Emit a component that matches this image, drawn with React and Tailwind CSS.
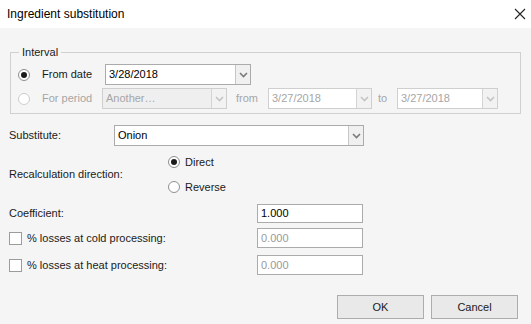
import React from "react";

const Chevron = ({ disabled }) => (
  <svg width="9" height="6" viewBox="0 0 9 6">
    <path
      d="M1 1 L4.5 4.5 L8 1"
      fill="none"
      stroke={disabled ? "#c4c4c4" : "#7a7a7a"}
      strokeWidth="1.6"
    />
  </svg>
);

function Combo({ value, width, height = "h-[21px]", disabled, grayField }) {
  return (
    <div
      className={`flex ${height} ${width} border ${
        disabled ? "border-[#cfcfcf]" : "border-[#ababab]"
      } ${grayField ? "bg-[#efefef]" : "bg-white"}`}
    >
      <div
        className={`flex-1 flex items-center pl-[3px] ${
          disabled ? "text-[#a6a6a6]" : "text-black"
        }`}
      >
        {value}
      </div>
      <div
        className={`w-[15px] flex items-center justify-center border-l ${
          disabled ? "border-[#d4d4d4] bg-[#f2f2f2]" : "border-[#c6c6c6] bg-[#f0f0f0]"
        }`}
      >
        <Chevron disabled={disabled} />
      </div>
    </div>
  );
}

function Radio({ checked, disabled }) {
  return (
    <div
      className={`w-[12px] h-[12px] rounded-full border flex items-center justify-center bg-white ${
        disabled ? "border-[#cdcdcd]" : "border-[#8f8f8f]"
      }`}
    >
      {checked && <div className="w-[6px] h-[6px] rounded-full bg-[#1c1c1c]" />}
    </div>
  );
}

function NumInput({ value, muted, height = "h-[20px]" }) {
  return (
    <div
      className={`w-[106px] ${height} border border-[#ababab] bg-white flex items-center pl-[3px] ${
        muted ? "text-[#9a9a9a]" : "text-black"
      }`}
    >
      {value}
    </div>
  );
}

export default function App() {
  return (
    <div
      className="w-[531px] h-[324px] bg-[#f5f5f5] text-[11px] text-[#1a1a1a] flex flex-col"
      style={{ fontFamily: '"Liberation Sans", Arial, sans-serif' }}
    >
      {/* title bar */}
      <div className="h-[28px] bg-white flex items-center justify-between pl-[7px] pr-[5px] shrink-0">
        <span className="text-[12px] text-black">Ingredient substitution</span>
        <svg width="12" height="12" viewBox="0 0 12 12">
          <path d="M1 1 L11 11 M11 1 L1 11" stroke="#222" strokeWidth="1.1" />
        </svg>
      </div>

      {/* interval group */}
      <fieldset className="mt-[17px] ml-[10px] w-[511px] border border-[#d0d0d0] pb-[4px]">
        <legend className="ml-[8px] px-[3px] leading-[14px]">Interval</legend>
        <div className="flex flex-col gap-[3px] mt-[5px]">
          <div className="flex items-center h-[21px]">
            <div className="ml-[7px] mr-[12px]">
              <Radio checked />
            </div>
            <span className="w-[63px]">From date</span>
            <Combo value="3/28/2018" width="w-[146px]" />
          </div>
          <div className="flex items-center h-[21px] text-[#a6a6a6]">
            <div className="ml-[7px] mr-[12px]">
              <Radio disabled />
            </div>
            <span className="w-[60px]">For period</span>
            <Combo value="Another…" width="w-[125px]" disabled grayField />
            <span className="w-[41px] pl-[9px]">from</span>
            <Combo value="3/27/2018" width="w-[104px]" disabled />
            <span className="w-[25px] pl-[6px]">to</span>
            <Combo value="3/27/2018" width="w-[101px]" disabled />
          </div>
        </div>
      </fieldset>

      {/* substitute */}
      <div className="flex items-center mt-[11px] ml-[9px]">
        <span className="w-[105px]">Substitute:</span>
        <Combo value="Onion" width="w-[250px]" height="h-[21px]" />
      </div>

      {/* direction */}
      <div className="flex items-center mt-[6px] ml-[9px]">
        <span className="w-[159px]">Recalculation direction:</span>
        <div className="flex flex-col gap-[5px]">
          <div className="flex items-center h-[20px] gap-[5px]">
            <Radio checked />
            <span>Direct</span>
          </div>
          <div className="flex items-center h-[20px] gap-[5px]">
            <Radio />
            <span>Reverse</span>
          </div>
        </div>
      </div>

      {/* numeric fields */}
      <div className="flex items-center mt-[7px] ml-[9px]">
        <span className="w-[248px]">Coefficient:</span>
        <NumInput value="1.000" height="h-[19px]" />
      </div>
      <div className="flex items-center mt-[5px] ml-[9px]">
        <div className="w-[13px] h-[13px] border border-[#9c9c9c] bg-white mr-[5px]" />
        <span className="w-[230px]">% losses at cold processing:</span>
        <NumInput value="0.000" muted />
      </div>
      <div className="flex items-center mt-[7px] ml-[9px]">
        <div className="w-[13px] h-[13px] border border-[#9c9c9c] bg-white mr-[5px]" />
        <span className="w-[230px]">% losses at heat processing:</span>
        <NumInput value="0.000" muted />
      </div>

      {/* buttons */}
      <div className="flex justify-end gap-[7px] mt-[20px] mr-[13px]">
        <button className="w-[87px] h-[24px] border border-[#adadad] bg-[#e9e9e9] text-[11px]">
          OK
        </button>
        <button className="w-[87px] h-[24px] border border-[#adadad] bg-[#e9e9e9] text-[11px]">
          Cancel
        </button>
      </div>
    </div>
  );
}
